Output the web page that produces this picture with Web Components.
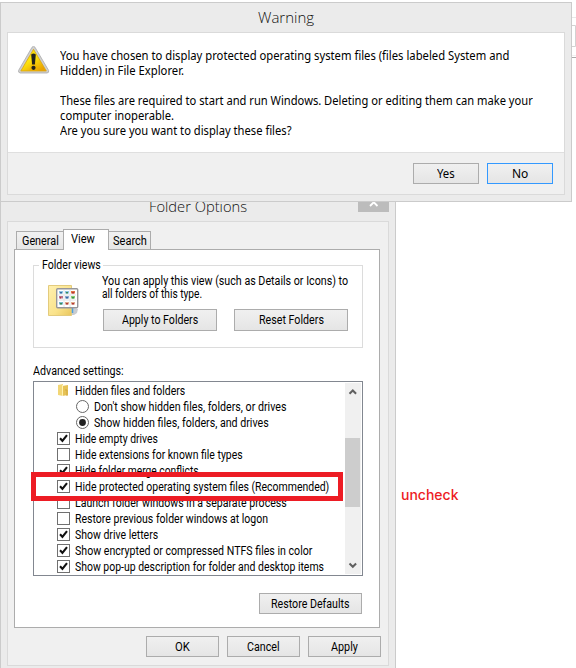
<!DOCTYPE html>
<html lang="en"><head><meta charset="utf-8"><title>Folder Options</title>
<style>
html,body{margin:0;width:576px;height:668px;overflow:hidden;background:#fff}
</style></head><body>
<desk-top></desk-top>
<script>
const define=(name,html,setup)=>{
  const t=document.createElement('template');t.innerHTML=html;
  customElements.define(name,class extends HTMLElement{
    constructor(){super();this.attachShadow({mode:'open'}).append(t.content.cloneNode(true));}
    connectedCallback(){if(setup)setup(this,this.shadowRoot);}
  });
};

// One line of text condensed or widened to the width in its "w" attribute.
define('fit-text',`<style>
:host{display:block;flex:none;white-space:pre;line-height:inherit}
span{display:inline-block;transform-origin:0 50%}
</style><span><slot></slot></span>`,(el,r)=>{
  const w=+el.getAttribute('w'),s=r.querySelector('span');
  el.style.width=w+'px';
  s.style.transform='scaleX('+(w/s.offsetWidth)+')';
});

define('push-button',`<style>
:host{display:flex;align-items:center;justify-content:center;box-sizing:border-box;height:21px;border:1px solid #acacac;background:linear-gradient(#f0f0f0,#e5e5e5);line-height:18px;flex:none}
:host([primary]){border-color:#3399ff}
</style><slot></slot>`);

define('warning-icon',`<style>:host{display:block;width:32px;height:30px;flex:none}svg{display:block}</style>
<svg width="32" height="30" viewBox="0 0 32 30"><defs><linearGradient id="g" x2=".7" y2="1"><stop offset="0" stop-color="#f7d000"/><stop offset=".5" stop-color="#ffe70c"/><stop offset="1" stop-color="#e9a200"/></linearGradient></defs>
<path d="M14 1.3Q15.5 -.9 17 1.3L30.6 24.4Q31.3 26.8 29 27H2.3Q0 26.7 .6 24.4Z" fill="#d0d0d0" stroke="#aaa9a9" stroke-width=".8"/>
<path d="M15.5 3.3L28.3 25H2.8Z" fill="url(#g)" stroke="#d9a514" stroke-width=".8"/>
<path d="M15.5 13L21 25H11Z" fill="#eeb000" opacity=".5"/>
<path d="M13.2 8.5Q15.5 6.4 17.8 8.5L16.9 18.6H14.1Z" fill="#24221d"/><circle cx="15.5" cy="21.8" r="2.1" fill="#24221d"/></svg>`);

define('folder-view-icon',`<style>:host{display:block;width:32px;height:32px;flex:none}svg{display:block}</style>
<svg width="32" height="32" viewBox="0 0 32 32"><defs><linearGradient id="f" x2="1" y2="1"><stop offset="0" stop-color="#fff0b0"/><stop offset=".6" stop-color="#fae38b"/><stop offset="1" stop-color="#e9c65d"/></linearGradient></defs>
<path d="M.5 .5H23.5V30.5H.5Z" fill="url(#f)" stroke="#e3cb7d"/>
<path d="M24 23L30 24L29 28L26 30H24Z" fill="#c9ccd0"/><path d="M24.5 23V28" stroke="#4ba0df" stroke-width="1.5"/>
<rect x="8.7" y="3.7" width="21" height="19" rx="1" fill="#fff" stroke="#96969a" stroke-width="1.4"/>
<path d="M16 5V22M22 5V22M10 10H28M10 15H28" stroke="#e2e4e6"/>
<g opacity=".85"><path d="M11 6h4v2.5h-4zM17 6h4v2.5h-4z" fill="#7dbbe0"/><path d="M23 6h4v2.5h-4z" fill="#dc5a24"/><path d="M11 11h4v2.5h-4z" fill="#b05a77"/><path d="M17 11h4v2.5h-4z" fill="#7d99c8"/><path d="M23 11h4v2.5h-4z" fill="#75c657"/><path d="M11 17h4v2.5h-4z" fill="#61afc1"/><path d="M17 17h4v2.5h-4zM23 17h4v2.5h-4z" fill="#db9d77"/>
<path d="M12 7h2v1.5h-2zM18 12h2v1.5h-2z" fill="#145793"/><path d="M18 7h2v1.5h-2zM24 12h2v1.5h-2zM12 18h2v1.5h-2z" fill="#18763b"/><path d="M24 7h2v1.5h-2zM24 18h2v1.5h-2zM12 12h1v1.5h-1zM18 18h2v1.5h-2z" fill="#a51717"/></g></svg>`);

// Row of the settings tree; "kind" picks its glyph.
const glyphs={
 folder:'<svg width="13" height="13"><path d="M1 1L6 0V12L1 11Z" fill="#f2d675"/><path d="M5 2L11 1V11L5 12Z" fill="#e6c256"/><path d="M5.5 1V12" stroke="#fff1b0"/><path d="M8 6H10V12" stroke="#d1a940" fill="none"/></svg>',
 off:'<svg width="13" height="13"><rect x=".5" y=".5" width="12" height="12" fill="#fff" stroke="#707070"/></svg>',
 on:'<svg width="13" height="13"><rect x=".5" y=".5" width="12" height="12" fill="#fff" stroke="#707070"/><path d="M3 6.3L5.4 8.8L10 3.1" fill="none" stroke="#111" stroke-width="2.1"/></svg>',
 radio:'<svg width="13" height="13"><circle cx="6.5" cy="6.5" r="6" fill="#fff" stroke="#666"/></svg>',
 picked:'<svg width="13" height="13"><circle cx="6.5" cy="6.5" r="6" fill="#fff" stroke="#666"/><circle cx="6.5" cy="6.5" r="3.4" fill="#222"/></svg>'};
define('setting-row',`<style>
:host{display:flex;align-items:flex-start;height:16px;line-height:16px;padding-left:22px;gap:5px}
:host([kind=radio]),:host([kind=picked]){padding-left:41px}
i{display:block;width:13px;height:13px;flex:none;margin-top:1px}svg{display:block}
</style><i></i><slot></slot>`,(el,r)=>{r.querySelector('i').innerHTML=glyphs[el.getAttribute('kind')];});

define('scroll-bar',`<style>
:host{display:flex;flex-direction:column;align-items:center;width:16px;height:191px;background:#f0f0f0;flex:none}
b{display:block;width:15px;height:69px;background:#cdcdcd;align-self:flex-start}
svg{display:block;flex:none}.a{margin-bottom:38px}.z{margin-top:auto}
</style><svg class="a" width="16" height="17"><path d="M4.5 10.8L7.8 7.5L11.1 10.8" fill="none" stroke="#606060" stroke-width="2"/></svg><b></b>
<svg class="z" width="16" height="17"><path d="M4.5 6.5L7.8 9.8L11.1 6.5" fill="none" stroke="#606060" stroke-width="2"/></svg>`);

define('settings-list',`<style>
:host{display:flex;box-sizing:border-box;width:330px;height:195px;border:1px solid #828790;padding:1px;background:#fff;margin-top:3px}
div{flex:1;min-width:0;overflow:hidden}
</style><div><slot></slot></div><scroll-bar></scroll-bar>`);

define('tab-item',`<style>
:host{display:flex;box-sizing:border-box;height:18px;border:1px solid #acacac;border-bottom:0;background:linear-gradient(#f1f1f1,#e6e6e6);line-height:18px;flex:none;padding-left:5px}
:host(:last-child){padding-left:4px}
:host([active]){height:21px;background:#fff;margin:0 -1px -1px;z-index:1;padding-left:7px}
</style><slot></slot>`);

define('group-box',`<style>
:host{display:block}
fieldset{box-sizing:border-box;width:330px;height:90px;margin:0;padding:0 0 0 14px;border:1px solid #dcdcdc}
legend{padding:0 2px 0 3px;margin-left:-9px;height:14px;line-height:14px}
</style><fieldset><legend><slot name="legend"></slot></legend><slot></slot></fieldset>`);

define('warning-dialog',`<style>
:host{display:flex;flex-direction:column;box-sizing:border-box;width:572px;height:200px;border:1px solid #cbcbcb;background:#ebebeb;font:12px/15px "Noto Sans","Open Sans",sans-serif;color:#000;padding:0 6px 6px}
header{height:29px;display:flex;justify-content:center;font:300 15px/29px "Open Sans","Noto Sans",sans-serif;color:#111}
main{flex:1;display:flex;flex-direction:column;border:1px solid #dadada;background:#f0f0f0}
.body{height:120px;box-sizing:border-box;background:#fff;border-bottom:1px solid #dfdfdf;display:flex;padding:13px 0 0 10px;gap:10px}
.copy{padding-top:2px}.gap{height:15px}
footer{display:flex;justify-content:flex-end;gap:8px;padding:10px 11px 0 0}
push-button{width:66px}
</style><header><fit-text w="56">Warning</fit-text></header>
<main><div class="body"><warning-icon></warning-icon><div class="copy">
<fit-text w="449">You have chosen to display protected operating system files (files labeled System and</fit-text>
<fit-text w="124">Hidden) in File Explorer.</fit-text><div class="gap"></div>
<fit-text w="473">These files are required to start and run Windows. Deleting or editing them can make your</fit-text>
<fit-text w="114">computer inoperable.</fit-text>
<fit-text w="232">Are you sure you want to display these files?</fit-text></div></div>
<footer><push-button><fit-text w="18">Yes</fit-text></push-button><push-button primary><fit-text w="16">No</fit-text></push-button></footer></main>`);

define('folder-options',`<style>
:host{display:flex;flex-direction:column;box-sizing:border-box;width:396px;height:480px;border:1px solid #cbcbcb;border-width:0 1px;background:#ebebeb;font:12px/13px Roboto,sans-serif;color:#000;padding:0 6px}
header{height:30px;display:flex;flex:none;padding-left:142px;font:300 15px/31px "Open Sans","Noto Sans",sans-serif;color:#111}
.close{display:block;width:31px;height:21px;background:#bcbcbc;margin:0 0 0 auto}
main{box-sizing:border-box;height:445px;flex:none;border:1px solid #dadada;background:#f0f0f0;padding:7px 6px 0}
.tabs{display:flex;align-items:flex-end;height:20px;padding-left:2px;position:relative;z-index:1}
.page{box-sizing:border-box;width:366px;height:379px;border:1px solid #acacac;background:#fff;padding:8px 0 0 18px}
.row{display:flex}
.views{gap:22px}
folder-view-icon{margin-top:13px}
.views .t{padding-top:3px}
.btns{display:flex;gap:17px;padding:8px 0 0 1px}.btns push-button{width:114px;height:22px}
.adv{margin-top:17px}
.restore{width:103px;margin:17px 0 0 226px}
footer{display:flex;gap:8px;padding:8px 0 0 132px}footer push-button{width:73px}
</style><header><fit-text w="98">Folder Options</fit-text><svg class="close" viewBox="0 0 31 21"><path d="M12 7.5L19.5 15M19.5 7.5L12 15" stroke="#fff" stroke-width="1.8"/></svg></header>
<main><div class="tabs"><tab-item style="width:48px"><fit-text w="37">General</fit-text></tab-item><tab-item active style="width:46px"><fit-text w="24">View</fit-text></tab-item><tab-item style="width:43px"><fit-text w="34">Search</fit-text></tab-item></div>
<div class="page"><group-box><fit-text slot="legend" w="59">Folder views</fit-text>
<div class="row views"><folder-view-icon></folder-view-icon><div class="t"><fit-text w="246">You can apply this view (such as Details or Icons) to</fit-text><fit-text w="100">all folders of this type.</fit-text>
<div class="btns"><push-button><fit-text w="76">Apply to Folders</fit-text></push-button><push-button><fit-text w="65">Reset Folders</fit-text></push-button></div></div></div></group-box>
<fit-text class="adv" w="91">Advanced settings:</fit-text>
<settings-list>
<setting-row kind="folder"><fit-text w="110">Hidden files and folders</fit-text></setting-row>
<setting-row kind="radio"><fit-text w="192">Don't show hidden files, folders, or drives</fit-text></setting-row>
<setting-row kind="picked"><fit-text w="175">Show hidden files, folders, and drives</fit-text></setting-row>
<setting-row kind="on"><fit-text w="83">Hide empty drives</fit-text></setting-row>
<setting-row kind="off"><fit-text w="168">Hide extensions for known file types</fit-text></setting-row>
<setting-row kind="on"><fit-text w="124">Hide folder merge conflicts</fit-text></setting-row>
<setting-row kind="on"><fit-text w="254">Hide protected operating system files (Recommended)</fit-text></setting-row>
<setting-row kind="off"><fit-text w="212">Launch folder windows in a separate process</fit-text></setting-row>
<setting-row kind="off"><fit-text w="193">Restore previous folder windows at logon</fit-text></setting-row>
<setting-row kind="on"><fit-text w="83">Show drive letters</fit-text></setting-row>
<setting-row kind="on"><fit-text w="237">Show encrypted or compressed NTFS files in color</fit-text></setting-row>
<setting-row kind="on"><fit-text w="249">Show pop-up description for folder and desktop items</fit-text></setting-row>
</settings-list>
<push-button class="restore"><fit-text w="79">Restore Defaults</fit-text></push-button></div>
<footer><push-button><fit-text w="15">OK</fit-text></push-button><push-button><fit-text w="33">Cancel</fit-text></push-button><push-button><fit-text w="27">Apply</fit-text></push-button></footer></main>`);

// Strip of the page behind the dialogs.
define('page-edge',`<style>:host{display:block;width:4px;height:58px}svg{display:block}</style>
<svg width="4" height="58"><path d="M0 17.5H4" stroke="#e8e8e8"/><path d="M0 25.5H3.5V46.5H0" fill="none" stroke="#d2d2d2"/><path d="M0 55.5H4" stroke="#f0f0f0"/><path d="M0 57.5H4" stroke="#aaa"/></svg>`);

define('desk-top',`<style>
:host{display:block;position:relative;width:576px;height:668px;overflow:hidden;background:#fff}
folder-options,warning-dialog,page-edge,.mark,.note{position:absolute}
folder-options{left:0;top:191px}warning-dialog{left:0;top:2px}page-edge{left:572px;top:0}
.mark{box-sizing:border-box;left:31px;top:472px;width:312px;height:29px;border:5px solid #ed1c24}
.note{left:401px;top:486px;font:500 14px/18px Inter,sans-serif;color:#ed1c24}
</style><folder-options></folder-options><page-edge></page-edge><warning-dialog></warning-dialog><div class="mark"></div><fit-text class="note" w="57">uncheck</fit-text>`);
</script></body></html>
